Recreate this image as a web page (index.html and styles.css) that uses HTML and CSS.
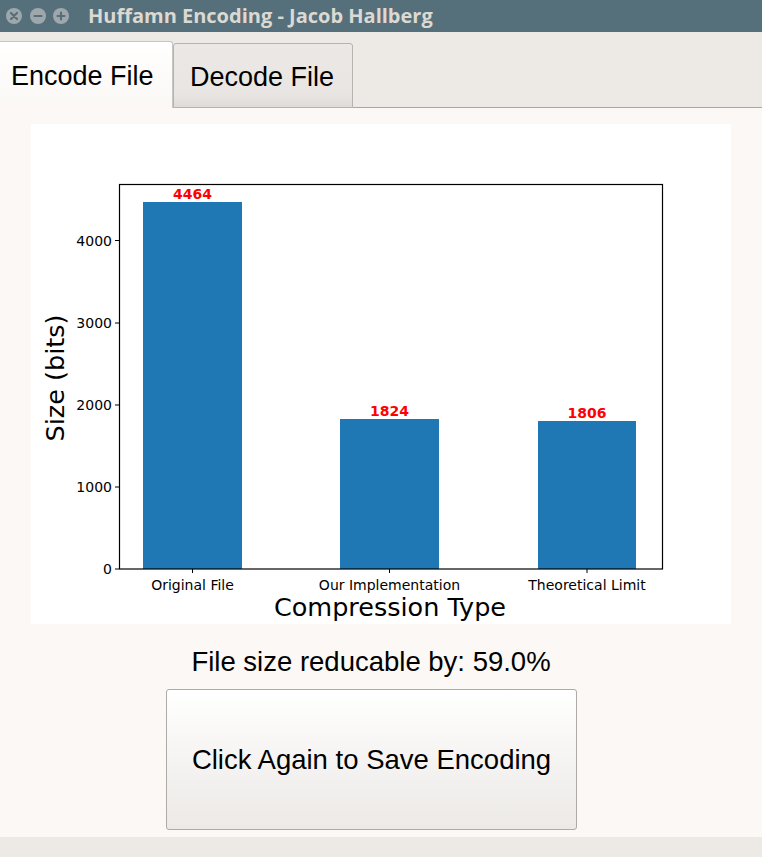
FILE: index.html
```html
<!DOCTYPE html>
<html>
<head>
<meta charset="utf-8">
<link rel="stylesheet" href="styles.css">
</head>
<body>
<div class="window">
  <div class="titlebar">
    <div class="wbtns">
      <svg class="wbtn" viewBox="0 0 18 18" width="18" height="18"><circle cx="9" cy="9" r="8" fill="#9ea7ab"/><path d="M6 6 L12 12 M12 6 L6 12" stroke="#56707b" stroke-width="2.2" stroke-linecap="round"/></svg>
      <svg class="wbtn" viewBox="0 0 18 18" width="18" height="18"><circle cx="9" cy="9" r="8" fill="#9ea7ab"/><path d="M5.5 9 L12.5 9" stroke="#56707b" stroke-width="2.2" stroke-linecap="round"/></svg>
      <svg class="wbtn" viewBox="0 0 18 18" width="18" height="18"><circle cx="9" cy="9" r="8" fill="#9ea7ab"/><path d="M5.5 9 L12.5 9 M9 5.5 L9 12.5" stroke="#56707b" stroke-width="2.2" stroke-linecap="round"/></svg>
    </div>
    <div class="title">Huffamn Encoding - Jacob Hallberg</div>
  </div>
  <div class="tabbar">
    <div class="tab active">Encode File</div>
    <div class="tab">Decode File</div>
    <div class="tabfill"></div>
  </div>
  <div class="panel">
    <div class="chart">
      <svg viewBox="0 0 700 500" width="700" height="500" class="plot">
        <rect x="0" y="0" width="700" height="500" fill="#ffffff"/>
        <rect x="112" y="78" width="99" height="367" fill="#1f77b4"/>
        <rect x="309" y="295" width="99" height="150" fill="#1f77b4"/>
        <rect x="507" y="297" width="98" height="148" fill="#1f77b4"/>
        <rect x="88.5" y="60.5" width="543" height="384.5" fill="none" stroke="#000" stroke-width="1.2"/>
        <g stroke="#000" stroke-width="1">
          <line x1="84" y1="445" x2="88" y2="445"/>
          <line x1="84" y1="363" x2="88" y2="363"/>
          <line x1="84" y1="281" x2="88" y2="281"/>
          <line x1="84" y1="199" x2="88" y2="199"/>
          <line x1="84" y1="116.5" x2="88" y2="116.5"/>
          <line x1="161.5" y1="445" x2="161.5" y2="449"/>
          <line x1="358.5" y1="445" x2="358.5" y2="449"/>
          <line x1="556" y1="445" x2="556" y2="449"/>
        </g>
        <g class="ticklbl" text-anchor="end">
          <text x="81" y="450">0</text>
          <text x="81" y="368">1000</text>
          <text x="81" y="286">2000</text>
          <text x="81" y="204">3000</text>
          <text x="81" y="121.5">4000</text>
        </g>
        <g class="ticklbl" text-anchor="middle">
          <text x="161.5" y="466">Original File</text>
          <text x="358.5" y="466">Our Implementation</text>
          <text x="556" y="466">Theoretical Limit</text>
        </g>
        <g class="barlbl" text-anchor="middle">
          <text x="161.5" y="75">4464</text>
          <text x="358.5" y="292">1824</text>
          <text x="556" y="294">1806</text>
        </g>
        <text class="axlbl" x="359" y="492" text-anchor="middle">Compression Type</text>
        <text class="axlbl" transform="translate(33 254) rotate(-90)" text-anchor="middle">Size (bits)</text>
      </svg>
    </div>
    <div class="summary">File size reducable by: 59.0%</div>
    <div class="savebtn">Click Again to Save Encoding</div>
  </div>
  <div class="statusbar"></div>
</div>
</body>
</html>
```

FILE: styles.css
```css
html, body {
  margin: 0;
  padding: 0;
  background: #edeae5;
}
.window {
  width: 762px;
  height: 857px;
  display: flex;
  flex-direction: column;
  overflow: hidden;
}
.titlebar {
  height: 32px;
  background: #56707b;
  display: flex;
  align-items: center;
  flex-shrink: 0;
}
.wbtns {
  display: flex;
  gap: 5.5px;
  padding-left: 5px;
  width: 82px;
  box-sizing: border-box;
}
.wbtn {
  display: block;
}
.title {
  font-family: "Open Sans", "DejaVu Sans", sans-serif;
  font-weight: bold;
  font-size: 20px;
  color: #dcd9d3;
  padding-left: 6px;
  margin-top: -1px;
}
.tabbar {
  height: 76px;
  display: flex;
  align-items: flex-end;
  flex-shrink: 0;
  background: #edeae5;
}
.tab {
  font-family: "Liberation Sans", Arial, sans-serif;
  font-size: 27px;
  color: #000;
  box-sizing: border-box;
}
.tab.active {
  width: 173px;
  height: 67px;
  background: linear-gradient(#ffffff, #fbf8f5);
  border-top: 1px solid #c8c6c2;
  border-right: 1px solid #c8c6c2;
  border-radius: 0 3px 0 0;
  padding: 19px 0 0 11px;
}
.tab:not(.active) {
  width: 180px;
  height: 65px;
  background: linear-gradient(#ebe8e5 0%, #e8e5e2 80%, #dedbd8 100%);
  border: 1px solid #b5b3b0;
  border-radius: 3px 3px 0 0;
  padding: 18px 0 0 16px;
}
.tabfill {
  flex: 1;
  height: 1px;
  background: #a9a7a4;
}
.panel {
  flex: 1;
  background: #fbf8f5;
  display: flex;
  flex-direction: column;
  align-items: flex-start;
  padding: 16px 0 0 31px;
}
.chart {
  width: 700px;
  height: 500px;
}
.plot {
  display: block;
}
.ticklbl text {
  font-family: "DejaVu Sans", sans-serif;
  font-size: 14px;
  fill: #000;
}
.barlbl text {
  font-family: "DejaVu Sans", sans-serif;
  font-size: 14px;
  font-weight: bold;
  fill: #ff0000;
}
.axlbl {
  font-family: "DejaVu Sans", sans-serif;
  font-size: 25.5px;
  fill: #000;
}
.summary {
  margin-left: -31px;
  width: 762px;
  text-align: center;
  font-family: "Liberation Sans", Arial, sans-serif;
  font-size: 27.5px;
  color: #000;
  margin-top: 24px;
  height: 28px;
  line-height: 28px;
  box-sizing: border-box;
  padding-right: 20px;
}
.savebtn {
  margin-top: 13px;
  margin-left: 135px;
  width: 411px;
  height: 141px;
  box-sizing: border-box;
  border: 1px solid #aeaaa6;
  border-radius: 3px;
  background: linear-gradient(#ffffff, #ece9e6);
  display: flex;
  align-items: center;
  justify-content: center;
  font-family: "Liberation Sans", Arial, sans-serif;
  font-size: 27.5px;
  color: #000;
}
.statusbar {
  height: 20px;
  background: #edeae5;
  flex-shrink: 0;
}
```
